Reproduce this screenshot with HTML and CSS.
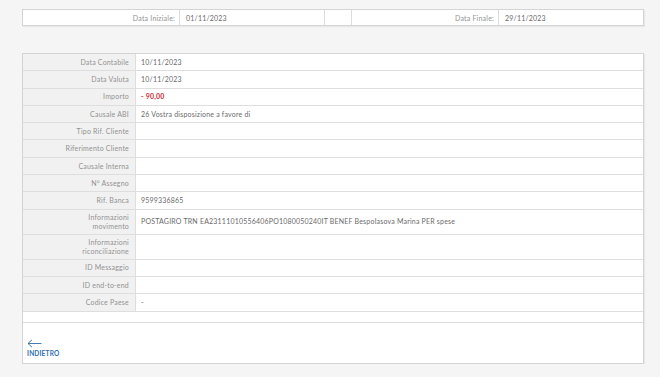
FILE: index.html
```html
<!DOCTYPE html>
<html lang="it">
  <head>
    <meta charset="UTF-8" />
    <title>Dettaglio movimento</title>
    <link rel="stylesheet" href="styles.css">
  </head>
  <body>
    <div class="page">
      <div class="filters">
        <div class="f-label">Data Iniziale:</div>
        <div class="f-value">01/11/2023</div>
        <div class="f-gap"></div>
        <div class="f-label">Data Finale:</div>
        <div class="f-value">29/11/2023</div>
      </div>

      <div class="detail">
        <div class="rows">
          <div class="label">Data Contabile</div><div class="value">10/11/2023</div>
          <div class="label">Data Valuta</div><div class="value">10/11/2023</div>
          <div class="label">Importo</div><div class="value red">- 90,00</div>
          <div class="label">Causale ABI</div><div class="value">26 Vostra disposizione a favore di</div>
          <div class="label">Tipo Rif. Cliente</div><div class="value"></div>
          <div class="label">Riferimento Cliente</div><div class="value"></div>
          <div class="label">Causale Interna</div><div class="value"></div>
          <div class="label">N° Assegno</div><div class="value"></div>
          <div class="label">Rif. Banca</div><div class="value">9599336865</div>
          <div class="label">Informazioni<br />movimento</div><div class="value">POSTAGIRO TRN EA23111010556406PO1080050240IT BENEF Bespolasova Marina PER spese</div>
          <div class="label">Informazioni<br />riconciliazione</div><div class="value"></div>
          <div class="label">ID Messaggio</div><div class="value"></div>
          <div class="label">ID end-to-end</div><div class="value"></div>
          <div class="label">Codice Paese</div><div class="value">-</div>
        </div>
        <div class="spacer"></div>
        <div class="footer">
          <a class="back" href="#">
            <svg width="15" height="9" viewBox="0 0 15 9">
              <path d="M14.5 4.5H1M5 0.8L1 4.5L5 8.2" fill="none" stroke="#2f6fae" stroke-width="0.9" />
            </svg>
            <span>INDIETRO</span>
          </a>
        </div>
      </div>
    </div>
  </body>
</html>
```

FILE: styles.css
```css
body {
  margin: 0;
  background-color: #f5f5f5;
  font-family: "Lato", "Liberation Sans", sans-serif;
  font-size: 7px;
  letter-spacing: 0.2px;
  color: #6a6a6a;
}
.page {
  width: 622px;
  padding: 9px 0 0 22px;
}
.filters {
  display: grid;
  grid-template-columns: 156px 145px 27px 147px 1fr;
  height: 17px;
  background: #fff;
  border: 1px solid #d4d4d4;
  box-sizing: border-box;
  box-shadow: 1px 1px 1px rgba(0, 0, 0, 0.05);
}
.filters > div {
  display: flex;
  align-items: center;
  border-left: 1px solid #dcdcdc;
}
.filters > div:first-child {
  border-left: none;
}
.f-label {
  justify-content: flex-end;
  padding-right: 4px;
  color: #929292;
}
.f-value {
  padding-left: 6px;
}
.detail {
  margin-top: 27px;
  background: #fff;
  border: 1px solid #d4d4d4;
  box-shadow: 1px 1px 1px rgba(0, 0, 0, 0.05);
}
.rows {
  display: grid;
  grid-template-columns: 113px 1fr;
}
.rows > div {
  display: flex;
  align-items: center;
  min-height: 17.3px;
  padding: 3.4px 6px;
  line-height: 8.6px;
  box-sizing: border-box;
  border-bottom: 1px solid #dedede;
}
.label {
  justify-content: flex-end;
  text-align: right;
  background: #f1f1f1;
  border-right: 1px solid #dedede;
  color: #929292;
}
.value {
  padding-left: 5px !important;
}
.red {
  color: #d42a35;
  font-weight: bold;
}
.spacer {
  height: 10px;
  border-bottom: 1px solid #dcdcdc;
}
.footer {
  height: 40px;
  display: flex;
  align-items: flex-end;
  padding: 0 0 6px 4px;
  box-sizing: border-box;
}
.back {
  display: flex;
  flex-direction: column;
  gap: 2px;
  text-decoration: none;
  color: #2f6fae;
  font-weight: bold;
  font-size: 6.5px;
}
```
